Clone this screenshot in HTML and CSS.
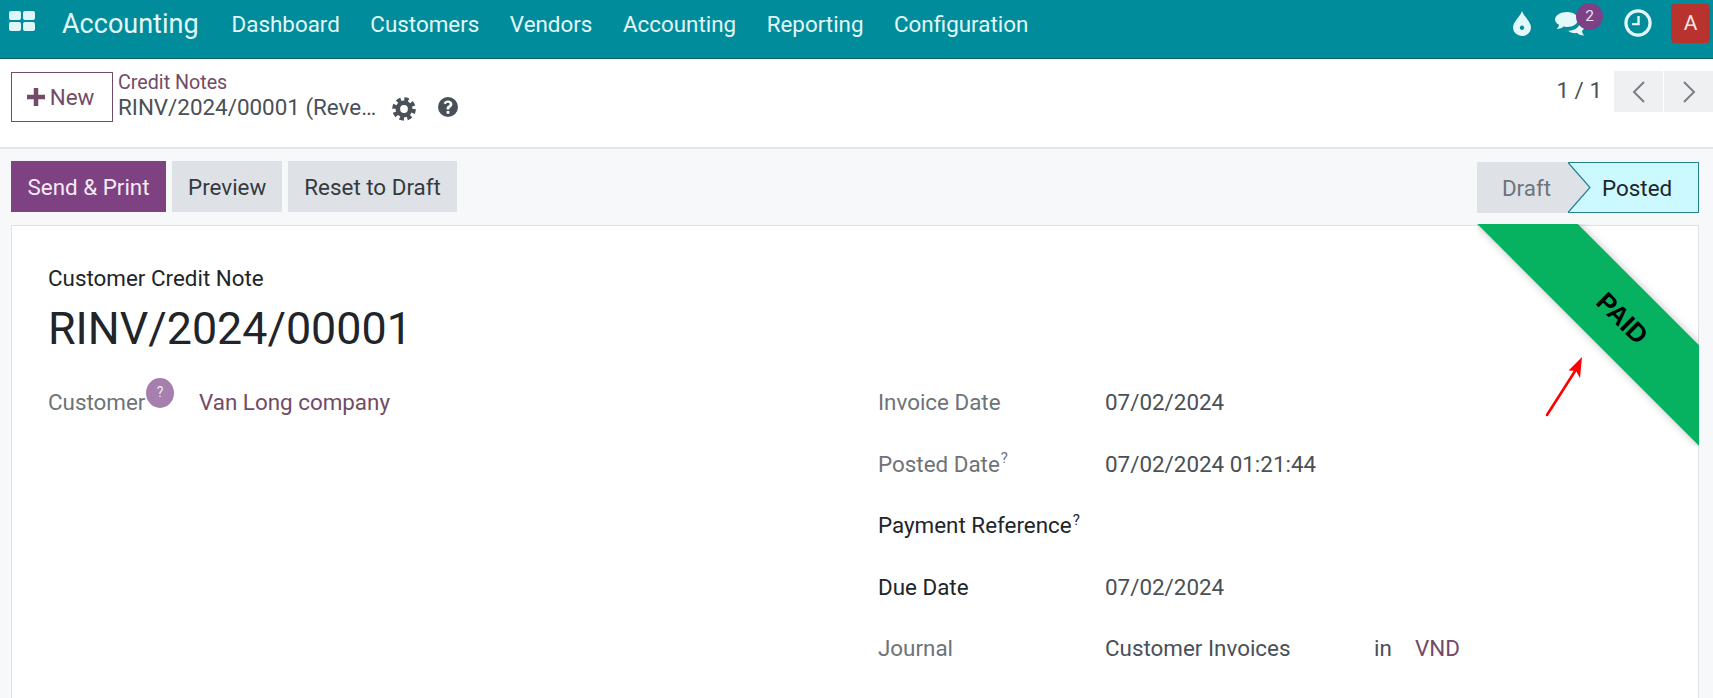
FILE: index.html
```html
<!DOCTYPE html>
<html lang="en">
<head>
<meta charset="utf-8">
<title>Accounting</title>
<link rel="stylesheet" href="styles.css">
</head>
<body>
<header class="navbar">
  <svg class="apps" viewBox="0 0 26 20" aria-hidden="true">
    <rect x="0" y="0" width="12" height="9" rx="2"/><rect x="14" y="0" width="12" height="9" rx="2"/>
    <rect x="0" y="11" width="12" height="9" rx="2"/><rect x="14" y="11" width="12" height="9" rx="2"/>
  </svg>
  <span class="brand">Accounting</span>
  <nav class="menu">
    <a>Dashboard</a><a>Customers</a><a>Vendors</a><a>Accounting</a><a>Reporting</a><a>Configuration</a>
  </nav>
  <div class="systray">
    <svg class="drop" viewBox="0 0 18 25" aria-hidden="true">
      <path fill-rule="evenodd" d="M9 0C10.500 5 18 11 18 16.500A9 8.500 0 0 1 0 16.500C0 11 7.500 5 9 0ZM9 14.500C7.800 14.500 6.800 15.500 6.800 16.800S7.800 19 9 19 11.200 18 11.200 16.800 10.200 14.500 9 14.500Z"/>
    </svg>
    <span class="chat">
      <svg viewBox="0 0 30 24" aria-hidden="true">
        <path d="M12 0C18.500 0 23 3.500 23 7.500S18.500 15 12 15C10.500 15 9.500 14.800 8.500 14.600 6.500 16.500 4 17 1.500 17 3.200 15.500 4 14 4 12.700 1.500 11.500 0 9.700 0 7.500 0 3.500 5.500 0 12 0Z"/>
        <path d="M25 8.500C28 9.800 30 11.500 30 14 30 16 28.800 17.500 27 18.700 27 20.300 27.800 22 29.500 23.500 26.500 23.500 24 22.800 22.300 21 20.500 21.300 18 21.200 16 20.500 14.800 20 14 19.500 13.300 18.800 20 18.800 25.500 14.800 25 8.500Z"/>
      </svg>
      <span class="count">2</span>
    </span>
    <svg class="clock" viewBox="0 0 26 26" aria-hidden="true">
      <circle cx="13" cy="13" r="11.200"/><path d="M13.500 6.500V14H7.500"/>
    </svg>
    <span class="avatar">A</span>
  </div>
</header>

<section class="panel">
  <button class="btn-new"><svg viewBox="0 0 16 16" aria-hidden="true"><path d="M6 0H10V6H16V10H10V16H6V10H0V6H6Z"/></svg>New</button>
  <div class="crumbs">
    <a class="crumb-link">Credit Notes</a>
    <div class="crumb-row">
      <span class="crumb-current">RINV/2024/00001 (Reve…</span>
      <svg class="gear" viewBox="0 0 24 24" aria-hidden="true">
        <circle class="gear-teeth" cx="12" cy="12" r="9.800"/>
        <circle class="gear-ring" cx="12" cy="12" r="6.200"/>
      </svg>
      <svg class="help" viewBox="0 0 20 20" aria-hidden="true">
        <path fill-rule="evenodd" d="M10 0A10 10 0 1 1 10 20 10 10 0 0 1 10 0ZM8.600 14V16.700H11.400V14ZM10 3.400C7.800 3.400 6.200 4.500 5.500 6.300L7.800 7.300C8.200 6.300 8.900 5.800 9.900 5.800 10.900 5.800 11.600 6.300 11.600 7.100 11.600 7.800 11.100 8.200 10.300 8.700 9.200 9.400 8.600 10.100 8.600 11.300V12.500H11.300V11.800C11.300 11.200 11.700 10.900 12.500 10.400 13.600 9.700 14.400 8.800 14.400 7.100 14.400 4.800 12.400 3.400 10 3.400Z"/>
      </svg>
    </div>
  </div>
  <div class="pager">
    <span class="pager-text">1 / 1</span>
    <button class="pager-btn"><svg viewBox="0 0 16 24" aria-hidden="true"><path d="M13 2L3 12L13 22"/></svg></button>
    <button class="pager-btn"><svg viewBox="0 0 16 24" aria-hidden="true"><path d="M3 2L13 12L3 22"/></svg></button>
  </div>
</section>

<main class="sheet-area">
  <div class="statusbar">
    <div class="actions">
      <button class="btn primary">Send &amp; Print</button>
      <button class="btn">Preview</button>
      <button class="btn">Reset to Draft</button>
    </div>
    <div class="steps">
      <span class="step-draft">Draft</span>
      <span class="step-posted">
        <svg class="step-arrow" viewBox="0 0 23 51" preserveAspectRatio="none" aria-hidden="true"><path d="M0 0.500L22 25.500L0 50.500"/></svg>
        Posted
      </span>
    </div>
  </div>

  <article class="sheet">
    <div class="ribbon"><span class="ribbon-band">PAID</span></div>
    <svg class="annotation" viewBox="0 0 40 64" aria-hidden="true">
      <path class="annotation-line" d="M2 61L32 14"/>
      <path class="annotation-head" d="M37 3L35 24L31 17L23.500 16.500Z"/>
    </svg>
    <div class="doc-type">Customer Credit Note</div>
    <h1 class="doc-name">RINV/2024/00001</h1>
    <div class="columns">
      <div class="col-left">
        <span class="label muted">Customer<span class="hint">?</span></span>
        <a class="link customer">Van Long company</a>
      </div>
      <div class="col-right">
        <div class="row"><span class="label muted">Invoice Date</span><span class="value">07/02/2024</span></div>
        <div class="row"><span class="label muted">Posted Date<sup>?</sup></span><span class="value">07/02/2024 01:21:44</span></div>
        <div class="row"><span class="label strong">Payment Reference<sup>?</sup></span><span class="value"></span></div>
        <div class="row"><span class="label strong">Due Date</span><span class="value">07/02/2024</span></div>
        <div class="row"><span class="label muted">Journal</span><span class="value journal"><span class="journal-name">Customer Invoices</span><span class="journal-in">in</span><a class="link">VND</a></span></div>
      </div>
    </div>
  </article>
</main>
</body>
</html>
```

FILE: styles.css
```css
* { box-sizing: border-box; }
html, body { margin: 0; height: 698px; overflow: hidden; }
body {
  font-family: Roboto, "Liberation Sans", sans-serif;
  font-size: 22.4px;
  color: #212529;
  background: #f7f8fa;
  width: 1713px;
}
button { font: inherit; border: 0; padding: 0; }

.navbar {
  height: 59px;
  display: flex;
  align-items: center;
  background: #018c9b;
  border-bottom: 1px solid #0d5f68;
  color: #e2f8fa;
  padding-left: 9px;
}
.apps { width: 26px; height: 20px; fill: #dff6f8; margin-top: -17px; flex: none; }
.brand { font-size: 27px; margin-left: 27px; margin-top: -11px; line-height: 36px; }
.menu { display: flex; gap: 30.500px; margin-left: 33px; margin-top: -10px; }
.menu a { display: block; }
.systray { margin-left: auto; display: flex; align-items: center; margin-top: -12px; padding-right: 3px; }
.drop { width: 18px; height: 25px; fill: #e2f8fa; margin-right: -1px; margin-left: 1px; }
.chat { position: relative; display: block; width: 30px; height: 24px; margin-left: 25px; margin-top: 2px; }
.chat svg { width: 30px; height: 24px; fill: #e2f8fa; display: block; }
.count {
  position: absolute; left: 21px; top: -9px;
  width: 27px; height: 27px; border-radius: 50%;
  background: #7c4186; color: #ecdff0;
  font-size: 15.500px; line-height: 26px; text-align: center;
}
.clock { width: 28px; height: 28px; margin-left: 39px; fill: none; stroke: #e2f8fa; stroke-width: 3; }
.clock path { stroke-width: 2.200; }
.avatar {
  width: 39px; height: 39px; margin-left: 19px; margin-top: 1px;
  background: #b8322e; border-radius: 4px; color: #f7e6e5;
  text-align: center; line-height: 39px; font-size: 21px;
}

.panel {
  height: 90px;
  display: flex;
  align-items: flex-start;
  background: #fff;
  border-bottom: 2px solid #e3e5e8;
  padding: 13px 0 0 11px;
}
.btn-new {
  width: 102px; height: 50px; background: #fff;
  border: 1px solid #714b67; color: #714b67;
  display: flex; align-items: center; justify-content: center; gap: 5px;
  padding-right: 1px;
}
.btn-new svg { width: 18px; height: 18px; fill: #714b67; flex: none; margin-left: -2px; }
.crumbs { margin-left: 5px; }
.crumb-link { display: block; color: #714b67; font-size: 19.700px; line-height: 22px; }
.crumb-row { display: flex; align-items: center; height: 27px; color: #495057; }
.crumb-current { line-height: 27px; white-space: nowrap; }
.gear { width: 24px; height: 24px; margin-left: 16px; margin-top: 2px; flex: none; }
.gear-teeth { fill: none; stroke: #495057; stroke-width: 4; stroke-dasharray: 4.300 3.400; }
.gear-ring { fill: none; stroke: #495057; stroke-width: 4.600; }
.help { width: 20px; height: 20px; margin-left: 22px; margin-top: -1px; fill: #495057; flex: none; }
.pager { margin-left: auto; display: flex; align-items: flex-start; gap: 1px; margin-top: -1px; }
.pager-text { margin-right: 11px; line-height: 38px; color: #495057; }
.pager-btn { width: 49px; height: 41px; background: #eff0f2; display: flex; align-items: center; justify-content: center; }
.pager-btn svg { width: 16px; height: 24px; fill: none; stroke: #7a7f85; stroke-width: 2; }

.sheet-area { padding: 0 14px 0 11px; }
.statusbar { height: 77px; display: flex; justify-content: space-between; padding-top: 12px; }
.actions { display: flex; gap: 6px; height: 51px; }
.btn { background: #dee2e6; color: #343a40; padding: 0 16px; height: 51px; }
.primary { background: #7e4182; color: #f4ebf5; padding: 0 16.500px; }
.steps { display: flex; height: 51px; margin-top: 1px; }
.step-draft {
  width: 91px; background: #dee2e6; color: #6c757d;
  display: flex; align-items: center; justify-content: center; padding-left: 8px;
}
.step-posted {
  position: relative; width: 131px;
  background: #ccf9ff; color: #212529;
  border: 1px solid #22838f; border-left: 0;
  display: flex; align-items: center; padding-left: 34px;
}
.step-arrow {
  position: absolute; left: 0; top: -1px; width: 23px; height: 51px;
  fill: #dee2e6; stroke: #22838f; stroke-width: 1.200;
}

.sheet {
  position: relative;
  height: 520px;
  width: 1688px;
  margin-top: -1px;
  background: #fff;
  border: 1px solid #dee2e6;
  padding: 33px 0 0 36px;
}
.ribbon {
  position: absolute; top: -2px; right: -1px;
  width: 222px; height: 222px; overflow: hidden;
}
.ribbon-band {
  position: absolute; left: -25px; top: 59px;
  width: 340px; height: 71px;
  transform: rotate(45deg);
  background: #06b25f;
  color: #000;
  font-family: "Liberation Sans", Arial, sans-serif;
  font-size: 26px;
  font-weight: 700;
  text-align: center;
  line-height: 71px;
  box-shadow: 0 0 8px rgba(0, 0, 0, .25);
}
.annotation { position: absolute; left: 1533px; top: 128px; width: 40px; height: 64px; }
.annotation-line { fill: none; stroke: #f00; stroke-width: 2.600; stroke-linecap: round; }
.annotation-head { fill: #f00; }

.doc-type { line-height: 28px; margin-top: 5px; }
.doc-name { font-size: 44.800px; font-weight: 400; line-height: 56px; margin: 9px 0 0; }
.columns { display: flex; margin-top: 30px; }
.col-left { width: 830px; display: flex; align-items: flex-start; }
.col-left .label { width: 151px; }
.col-right { flex: 1; display: flex; flex-direction: column; }
.row { display: flex; height: 61.500px; }
.label { width: 227px; line-height: 30px; position: relative; display: block; flex: none; white-space: nowrap; }
.muted { color: #6e7378; }
.strong { color: #212529; }
.value { color: #495057; line-height: 30px; display: flex; }
.link { color: #714b67; line-height: 30px; }
.hint {
  position: absolute; left: 98px; top: -9px;
  width: 28px; height: 30px; border-radius: 50%;
  background: #a67fae; color: #f3e9f5;
  font-size: 14px; line-height: 28px; text-align: center;
}
sup { font-size: 15px; line-height: 0; margin-left: 1px; }
.journal-name { width: 269px; }
.journal-in { width: 41px; }
```
